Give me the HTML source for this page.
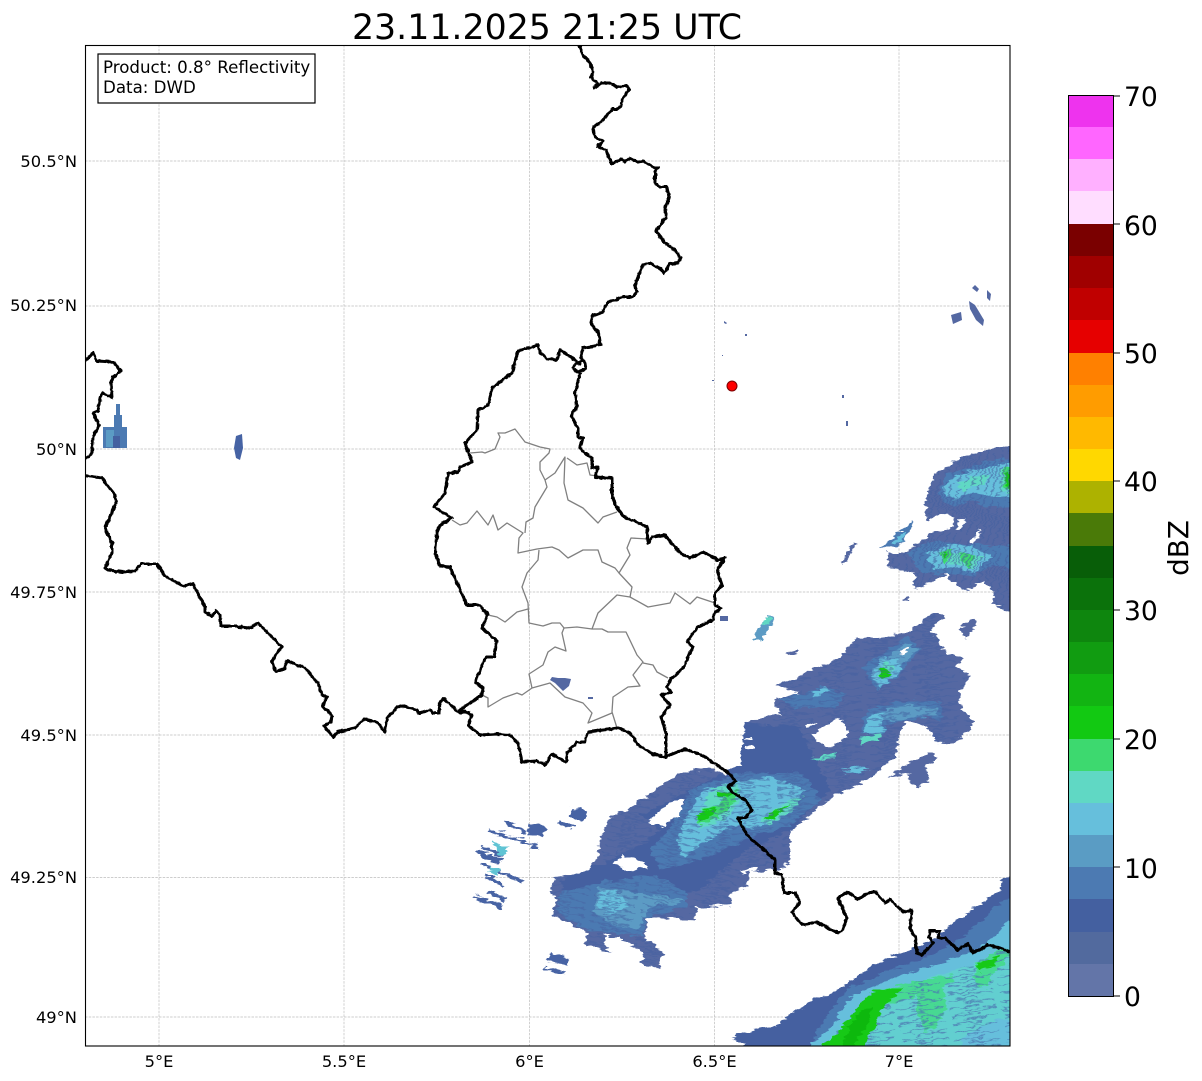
<!DOCTYPE html>
<html lang="en"><head><meta charset="utf-8"><title>23.11.2025 21:25 UTC</title>
<style>
html,body{margin:0;padding:0;background:#fff}
svg{display:block}
text{font-family:"DejaVu Sans","Liberation Sans",sans-serif;fill:#000}
</style></head><body>
<svg xmlns="http://www.w3.org/2000/svg" width="1202" height="1081" viewBox="0 0 1202 1081">
<defs>
<clipPath id="ax"><rect x="85" y="45" width="925" height="1001"/></clipPath>
<filter id="jag" x="-2%" y="-2%" width="104%" height="104%" filterUnits="objectBoundingBox">
<feTurbulence type="fractalNoise" baseFrequency="0.09 0.28" numOctaves="2" seed="4" result="n"/>
<feDisplacementMap in="SourceGraphic" in2="n" scale="9" xChannelSelector="R" yChannelSelector="G"/>
</filter>
<filter id="wig" x="-2%" y="-2%" width="104%" height="104%" filterUnits="objectBoundingBox">
<feTurbulence type="fractalNoise" baseFrequency="0.22" numOctaves="2" seed="9" result="n"/>
<feDisplacementMap in="SourceGraphic" in2="n" scale="3" xChannelSelector="R" yChannelSelector="G"/>
</filter>
<pattern id="stE" width="52" height="8" patternUnits="userSpaceOnUse" patternTransform="rotate(-9)">
<path d="M0 1.500H30M14 5.500H46" stroke="#4c7ab2" stroke-width="1.300"/>
</pattern>
<pattern id="stB" width="48" height="7" patternUnits="userSpaceOnUse" patternTransform="rotate(-4)">
<path d="M0 1.500H26M12 5H42" stroke="#4460a0" stroke-width="1.400"/>
</pattern>
<pattern id="stC" width="48" height="7" patternUnits="userSpaceOnUse" patternTransform="rotate(12)">
<path d="M0 1.500H26M12 5H42" stroke="#4460a0" stroke-width="1.400"/>
</pattern>
<pattern id="stA" width="7" height="46" patternUnits="userSpaceOnUse" patternTransform="rotate(22)">
<path d="M1.500 0V26M5 12V42" stroke="#4460a0" stroke-width="1.400"/>
</pattern>
</defs>
<rect width="1202" height="1081" fill="#fff"/>

<!-- grid -->
<g stroke="#bdbdbd" stroke-width="0.7" stroke-dasharray="2.5 1.2" fill="none">
<path d="M159 45V1046M344 45V1046M529.5 45V1046M714.5 45V1046M899 45V1046"/>
<path d="M85 161H1010M85 306H1010M85 449H1010M85 592H1010M85 735H1010M85 877.500H1010M85 1017H1010"/>
</g>

<g clip-path="url(#ax)">
<!-- radar -->
<g filter="url(#jag)">
 <!-- Cell A -->
 <path fill="#5468a2" d="M928 493 935 472 947 467 963 455 985 452 992 448 1030 444V616L1010 612 992 605 995 593 983 583 963 590 947 578 950 572 918 590 912 585 915 573 888 567 888 553 903 553 923 540 932 532 950 530 955 518 940 513 928 522 925 502Z"/>
 <path fill="#fff" d="M960 530 966 519 959 520 956 529ZM973 544 982 533 978 530 969 542Z"/>
 <path fill="#4c7ab2" d="M936 495 946 475 970 468 987 461 1030 456V506L990 507 973 501 953 507ZM908 553 927 541 953 543 993 546 1030 543V576L993 564 973 577 950 574 923 574Z"/>
 <path fill="#66bfdc" d="M941 490 955 475 993 466 1030 459V502L997 497 973 492 955 500ZM925 552 953 545 970 546 992 556 975 574 953 567 935 569Z"/>
 <path fill="#60d8c4" d="M955 484 975 477 990 475 985 484 965 490ZM1000 470 1030 464V500L1000 490ZM935 552 985 556 972 568 950 565Z"/>
 <path fill="#3dd96f" d="M1003 468 1030 466V500L1003 487ZM937 551 953 551 945 565ZM960 553 976 554 968 569Z"/>
 <path fill="#12c912" d="M942 554 947 553 945 559ZM1004 475 1010 472 1010 488 1005 485Z"/>
 <path fill="url(#stA)" opacity=".6" d="M928 493 935 472 947 467 963 455 985 452 992 448 1030 444V616L1010 612 992 605 995 593 983 583 963 590 947 578 950 572 918 590 912 585 915 573 888 567 888 553 903 553 923 540 932 532 950 530 955 518 940 513 928 522 925 502Z"/>
 <path fill="#4c7ab2" d="M882 547 913 520 912 528 897 548Z"/>
 <path fill="#66bfdc" d="M892 543 905 531 907 534 897 544Z"/>
 <path fill="#5468a2" d="M842 563 853 542 855 545 846 563ZM902 600 908 597 909 600 903 601Z"/>

 <!-- Cell B + C main -->
 <path fill="#5468a2" d="M745 723 762 717 783 715 772 700 800 693 775 685 802 675 840 657 858 637 882 638 913 630 933 612 945 617 930 630 947 653 963 657 957 667 970 675 957 700 975 725 955 743 937 742 927 727 907 722 900 732 895 757 873 777 833 797 813 813 790 830 790 863 780 870 750 872 748 885 730 893 732 905 697 908 695 920 648 917 645 940 653 943 663 953 660 968 642 965 643 952 633 947 627 940 605 935 605 947 613 953 585 945 587 932 570 925 552 915 557 897 550 892 555 877 587 872 598 857 600 840 610 817 630 807 657 788 678 773 712 768 727 775 743 763Z"/>
 <path fill="#4460a0" d="M745 723 800 728 820 770 830 790 790 830 745 850 700 890 640 905 600 915 570 905 560 880 600 865 640 845 660 830 640 815 690 790 740 765Z"/>
 <path fill="#4c7ab2" d="M557 913 560 893 597 883 657 875 687 893 687 907 647 917 643 937 587 930Z"/>
 <path fill="#5b9bc4" d="M593 913 598 887 633 893 683 897 687 902 650 907 637 930 610 923Z"/>
 <path fill="#66bfdc" d="M597 905 600 890 620 893 630 905 610 915Z"/>
 <path fill="#4c7ab2" d="M650 850 673 825 690 790 737 773 803 773 822 800 790 825 745 840 700 860 660 870Z"/>
 <path fill="#66bfdc" d="M683 823 703 790 733 783 770 777 805 790 770 823 757 827 730 827 703 843 683 857 677 840Z"/>
 <path fill="#60d8c4" d="M697 820 712 788 737 784 740 800 725 820 700 830ZM760 820 790 800 803 797 790 812 770 825Z"/>
 <path fill="#3dd96f" d="M694 817 717 805 736 790 738 798 717 818 700 825Z"/>
 <path fill="#12c912" d="M695 815 717 808 715 813 700 822ZM717 793 733 792 727 798 718 798ZM763 818 783 807 790 805 782 812 770 820Z"/>
 <!-- Cell B interior -->
 <path fill="#4c7ab2" d="M863 667 907 637 922 648 897 677 877 690ZM860 733 863 717 873 707 907 700 940 703 943 720 927 717 887 725 883 735ZM777 700 810 690 820 685 845 693 835 708 800 708Z"/>
 <path fill="#5b9bc4" d="M870 672 905 643 918 650 895 672 878 686ZM868 725 875 712 905 704 935 708 938 716 890 720Z"/>
 <path fill="#66bfdc" d="M873 675 882 657 897 660 902 670 880 688ZM862 732 870 715 885 712 882 727 885 733Z"/>
 <path fill="#60d8c4" d="M877 673 885 663 895 665 884 680ZM858 738 880 733 882 738 862 743ZM810 758 837 752 837 758 815 762Z"/>
 <path fill="#12c912" d="M881 668 886 666 890 675 880 680Z"/>
 <path fill="#66bfdc" d="M842 770 860 765 870 770 845 775ZM812 692 825 686 830 692 815 698Z"/>
 <!-- streak textures -->
 <path fill="url(#stB)" opacity=".55" d="M745 723 762 717 783 715 772 700 800 693 775 685 802 675 840 657 858 637 882 638 913 630 933 612 945 617 930 630 947 653 963 657 957 667 970 675 957 700 975 725 955 743 937 742 927 727 907 722 900 732 895 757 873 777 833 797 813 813 790 830 790 863 750 872 730 850 715 790 727 775 743 763Z"/>
 <path fill="url(#stC)" opacity=".55" d="M555 877 587 872 598 857 600 840 610 817 630 807 657 788 678 773 712 768 727 775 730 850 750 872 748 885 730 893 732 905 697 908 695 920 648 917 645 940 653 943 663 953 660 968 642 965 643 952 633 947 627 940 605 935 605 947 613 953 585 945 587 932 570 925 552 915 557 897 550 892Z"/>
 <!-- Holes -->
 <path fill="#fff" d="M648 822 670 802 683 800 680 815 663 827ZM812 733 840 717 850 733 833 747 817 743ZM623 855 640 860 648 867 630 872 613 863ZM740 871 757 866 758 870 742 874ZM780 868 790 866 790 874 780 874ZM745 739 753 738 753 740 745 741ZM745 746 753 745 753 747 745 748ZM900 652 908 647 909 649 901 654ZM805 725 815 722 816 724 806 727Z"/>
 <!-- Cell D -->
 <path fill="#5468a2" d="M888 777 913 760 933 752 937 760 925 767 930 780 917 787 907 780 910 773ZM958 628 977 618 975 627 965 639ZM785 653 798 649 798 652 788 655Z"/>
 <path fill="#5b9bc4" d="M754 640 755 635 768 615 773 616 771 625 762 639Z"/>
 <path fill="#60d8c4" d="M763 622 768 616 771 618 767 625Z"/>
 <!-- West streaks -->
 <g fill="none" stroke="#4663a4" stroke-width="3.500">
  <path d="M503 822 527 832M557 822 573 827M488 830 538 847M480 846 503 857M480 863 523 882M485 875 503 885M488 892 505 900M475 897 502 908M545 968 565 973"/>
  <path stroke-width="5" d="M478 852 500 862M480 900 500 905"/>
  <path stroke-width="8" d="M549 957 568 963"/>
 </g>
 <path fill="#4663a4" d="M530 823 547 827 542 838 528 835ZM572 807 587 812 583 822 570 817Z"/>
 <path fill="#60c4d4" d="M493 842 508 848 502 857 495 850ZM492 866 500 870 496 877 488 870Z"/>
 <!-- Cell E -->
 <path fill="#4460a0" d="M743 1060V1045L732 1037 753 1030 777 1025 787 1017 807 1003 837 990 857 977 883 960 917 948 943 933 957 920 1000 890 1003 878 1030 868V1060Z"/>
 <path fill="#4c7ab2" d="M810 1060V1045L830 1010 850 987 890 970 930 957 963 937 1000 903 1030 888V1060Z"/>
 <path fill="#66bfdc" d="M810 1060 810 1042 830 1030 850 997 907 973 943 963 977 950 1030 905V1060Z"/>
 <path fill="#62cfd0" d="M823 1060V1045L863 1003 900 987 947 973 973 963 1030 940V1017L997 1020 963 1037 957 1060Z"/>
 <path fill="#46d992" d="M870 993 905 983 953 975 955 982 905 1000 870 1010ZM917 988 943 986 947 1008 935 1028 925 1032 917 1010ZM975 963 1005 948 1012 955 990 975 988 988 976 985Z"/>
 <path fill="url(#stE)" opacity=".75" d="M823 1060V1045L863 1003 900 987 947 973 973 963 1030 940V1060Z"/>
 <path fill="#12c912" d="M823 1060V1045L835 1035 845 1023 853 1013 862 1003 870 993 893 988 903 988 887 1003 877 1017 877 1025 868 1032 868 1038 857 1060Z"/>
 <path fill="#0fb80f" d="M838 1060 848 1028 862 1010 873 1005 868 1025 855 1042 852 1060Z"/>
 <path fill="#12c912" d="M975 965 1000 955 995 965 980 972Z"/>
</g>
<!-- small crisp echoes -->
<g fill="#4c7ab2">
 <rect x="103" y="427" width="24" height="21"/><rect x="114" y="415" width="8" height="12"/><rect x="116" y="404" width="4" height="11"/>
 <rect x="106" y="430" width="8" height="17" fill="#5b9bc4"/><rect x="113" y="436" width="7" height="12" fill="#4460a0"/>
 <path fill="#4663a4" d="M236 436 242 434 243 448 240 460 236 458 234 448Z"/>
 <path fill="#5468a2" d="M558 678 565 678 571 679 569 686 563 691 555 683 550 680 552 677Z"/>
 <path fill="#5468a2" d="M975 285 979 289 977 292 972 288ZM987 290 991 294 990 301 987 298ZM969 301 975 305 984 320 983 326 976 320 970 309ZM951 315 961 312 962 320 953 324ZM720 616h8v5h-8ZM588 697h5v2h-5ZM842 395h2v3h-2ZM846 421h2v5h-2ZM724 321l3 2-1 1-2-1ZM745 334h2v2h-2ZM712 380h2v1h-2ZM722 355h1v1h-1Z"/>
</g>
<!-- cantons -->
<g fill="none" stroke="#808080" stroke-width="1.300" stroke-linejoin="round">
 <path d="M470 453 482 452 485 453 495 449 500 437 498 433 505 433 515 429 525 442 540 447 550 449 549 453 540 462 540 470 545 480 547 487 535 507 533 518 526 522 525 533"/>
 <path d="M452 520 460 525 467 523 477 511 488 525 493 515 498 530 507 523 523 533 519 538 518 553 537 549 552 547 559 550 568 558 583 550 598 550 602 562 615 568 619 573 630 555 627 548 631 538 648 539"/>
 <path d="M545 480 555 473 565 457 564 483 568 500 583 508 598 523 603 517 617 512"/>
 <path d="M567 458 577 465 587 463 590 475 597 476"/>
 <path d="M619 573 632 587 630 597 617 595 598 613 592 629"/>
 <path d="M630 597 648 607 670 603 675 593 690 604 697 597 715 603"/>
 <path d="M539 550 538 560 527 573 522 587 528 603 529 623 543 626 552 623 560 623 564 628 562 633 566 651 555 647 548 652 543 665 529 674 532 688"/>
 <path d="M564 628 577 627 592 629 602 629 608 632 626 632 637 655 643 662 633 675 640 686 628 687 613 697 612 712 617 728"/>
 <path d="M643 663 653 665 657 672 668 678"/>
 <path d="M488 615 497 617 505 622 517 612 528 609"/>
 <path d="M482 695 488 698 488 707 503 698 517 693 522 695 532 688 550 683 565 697 568 698 583 703 592 713 588 723 612 713"/>
</g>
<!-- borders -->
<g fill="none" stroke="#000" stroke-width="3" stroke-linejoin="round" stroke-linecap="round" filter="url(#wig)">
 <path d="M578 42 583 55 590 63 593 72 591 77 597 83 595 88 601 83 610 83 617 87 627 86 629 90 622 100 621 106 617 109 612 109 603 120 593 128 595 137 603 141 598 147 606 150 612 164 622 159 625 162 630 158 638 162 643 161 655 168 658 168 655 172 655 183 660 187 667 187 669 197 665 210 666 217 656 231 665 243 675 250 681 258 678 263 670 264 664 273 661 269 650 263 643 265 638 277 635 285 637 292 632 297 623 297 607 303 602 313 593 315 591 323 597 332 598 330 600 345 583 348 581 358 585 363 586 369 577 372 573 368 577 362 581 361 M580 373 575 393 577 407 571 415 578 428 578 437 583 438 580 448 585 453 592 458 592 468 598 467 595 477 612 478 612 493 615 505 625 518 637 522 647 527 648 543 653 537 665 535 680 553 690 558 703 552 718 560 725 558 717 570 722 585 715 593 715 605 721 608 715 613 713 620 698 627 687 642 693 647 683 668 670 680 667 687 671 692 661 695 670 705 661 717 666 733 666 757"/>
 <path d="M580 364 575 360 560 350 557 360 548 359 540 353 538 345 518 351 512 373 493 387 488 405 478 410 477 430 465 443 472 462 460 467 458 472 448 473 445 493 434 507 452 518 440 525 437 532 435 553 440 566 450 567 467 605 479 605 488 614 482 628 497 641 494 657 486 657 475 682 483 688 482 695 460 710 472 715 468 725 480 735 497 734 510 735 518 743 522 762 537 761 545 765 552 754 566 762 567 753 577 742 585 742 588 732 618 728 630 733 638 745 653 754 665 757 685 749 702 755 727 772 736 781 728 787 733 793 745 800 752 810 745 818 738 818 747 835 775 860 775 873 782 875 784 893 795 893 800 902 792 912 802 925 817 922 838 933 842 931 847 918 838 898 847 892 858 899 870 892 876 892 885 903 890 899 903 912 912 910 910 927 915 937 917 953 922 955 933 943 929 937 930 931 940 931 938 938 945 938 958 950 968 944 973 953 988 945 1000 948 1016 954"/>
 <path d="M80 367 93 353 97 361 113 362 121 371 113 377 111 383 112 398 103 393 100 398 98 411 93 413 99 425 93 437 92 453 80 463"/>
 <path d="M80 475 102 478 115 495 116 503 105 528 112 543 112 553 105 568 108 570 123 572 135 571 141 564 157 564 165 576 183 586 193 584 205 607 205 612 212 616 216 611 220 615 221 626 237 626 239 627 250 628 258 623 282 647 275 655 272 662 276 672 285 668 287 661 305 668 318 683 322 695 327 697 322 706 332 715 331 722 324 726 333 737 338 732 355 728 364 719 377 722 385 732 387 718 397 707 403 706 417 710 419 713 430 710 433 713 439 713 440 702 444 699 460 713 469 712"/>
</g>
<circle cx="732" cy="386" r="5" fill="#ff0000" stroke="#7a0000" stroke-width="1"/>
</g>

<!-- legend box -->
<rect x="98" y="54" width="217" height="49" fill="#fff" stroke="#000" stroke-width="1.200"/>
<text x="103" y="73" font-size="16.670">Product: 0.8° Reflectivity</text>
<text x="103" y="93" font-size="16.670">Data: DWD</text>
<rect x="85.500" y="45.500" width="924.500" height="1000.500" fill="none" stroke="#000" stroke-width="1.100"/>

<!-- title -->
<text x="547" y="39" font-size="34.750" text-anchor="middle">23.11.2025 21:25 UTC</text>

<!-- lat labels -->
<g font-size="16.300" text-anchor="end">
<text x="77" y="167">50.5°N</text>
<text x="77" y="311">50.25°N</text>
<text x="77" y="455">50°N</text>
<text x="77" y="598">49.75°N</text>
<text x="77" y="741">49.5°N</text>
<text x="77" y="883">49.25°N</text>
<text x="77" y="1023">49°N</text>
</g>
<!-- lon labels -->
<g font-size="16.300" text-anchor="middle">
<text x="159" y="1067">5°E</text>
<text x="344" y="1067">5.5°E</text>
<text x="529.500" y="1067">6°E</text>
<text x="714.500" y="1067">6.5°E</text>
<text x="899" y="1067">7°E</text>
</g>

<!-- colorbar -->
<g shape-rendering="crispEdges">
<rect x="1068" y="96" width="45" height="33" fill="#ee33ee"/>
<rect x="1068" y="127" width="45" height="33" fill="#ff66ff"/>
<rect x="1068" y="159" width="45" height="33" fill="#ffb0ff"/>
<rect x="1068" y="191" width="45" height="33" fill="#ffddff"/>
<rect x="1068" y="224" width="45" height="33" fill="#7a0000"/>
<rect x="1068" y="256" width="45" height="33" fill="#a00000"/>
<rect x="1068" y="288" width="45" height="33" fill="#c00000"/>
<rect x="1068" y="320" width="45" height="33" fill="#e60000"/>
<rect x="1068" y="353" width="45" height="33" fill="#ff8000"/>
<rect x="1068" y="385" width="45" height="33" fill="#ff9c00"/>
<rect x="1068" y="417" width="45" height="33" fill="#ffb900"/>
<rect x="1068" y="449" width="45" height="33" fill="#ffd800"/>
<rect x="1068" y="481" width="45" height="33" fill="#adb200"/>
<rect x="1068" y="513" width="45" height="33" fill="#4a7a08"/>
<rect x="1068" y="546" width="45" height="33" fill="#085e08"/>
<rect x="1068" y="578" width="45" height="33" fill="#0b720b"/>
<rect x="1068" y="610" width="45" height="33" fill="#0e860e"/>
<rect x="1068" y="642" width="45" height="33" fill="#119c11"/>
<rect x="1068" y="674" width="45" height="33" fill="#12b412"/>
<rect x="1068" y="706" width="45" height="33" fill="#12c912"/>
<rect x="1068" y="739" width="45" height="33" fill="#3dd96f"/>
<rect x="1068" y="771" width="45" height="33" fill="#60d8c4"/>
<rect x="1068" y="803" width="45" height="33" fill="#66bfdc"/>
<rect x="1068" y="835" width="45" height="33" fill="#5a9cc4"/>
<rect x="1068" y="867" width="45" height="33" fill="#4c7ab2"/>
<rect x="1068" y="899" width="45" height="33" fill="#4460a0"/>
<rect x="1068" y="932" width="45" height="33" fill="#526a9e"/>
<rect x="1068" y="964" width="45" height="32" fill="#6375a8"/>
</g>
<rect x="1068.500" y="95.500" width="45" height="901" fill="none" stroke="#000" stroke-width="1"/>
<path d="M1113 96h7M1113 224h7M1113 353h7M1113 481h7M1113 610h7M1113 739h7M1113 867h7M1113 996h7" stroke="#000" stroke-width="1" fill="none"/>
<g font-size="26.600">
<text x="1124" y="106">70</text>
<text x="1124" y="235">60</text>
<text x="1124" y="363">50</text>
<text x="1124" y="491">40</text>
<text x="1124" y="620">30</text>
<text x="1124" y="749">20</text>
<text x="1124" y="878">10</text>
<text x="1124" y="1006">0</text>
</g>
<text transform="translate(1188,548) rotate(-90)" font-size="27.800" text-anchor="middle">dBZ</text>
</svg>
</body></html>
